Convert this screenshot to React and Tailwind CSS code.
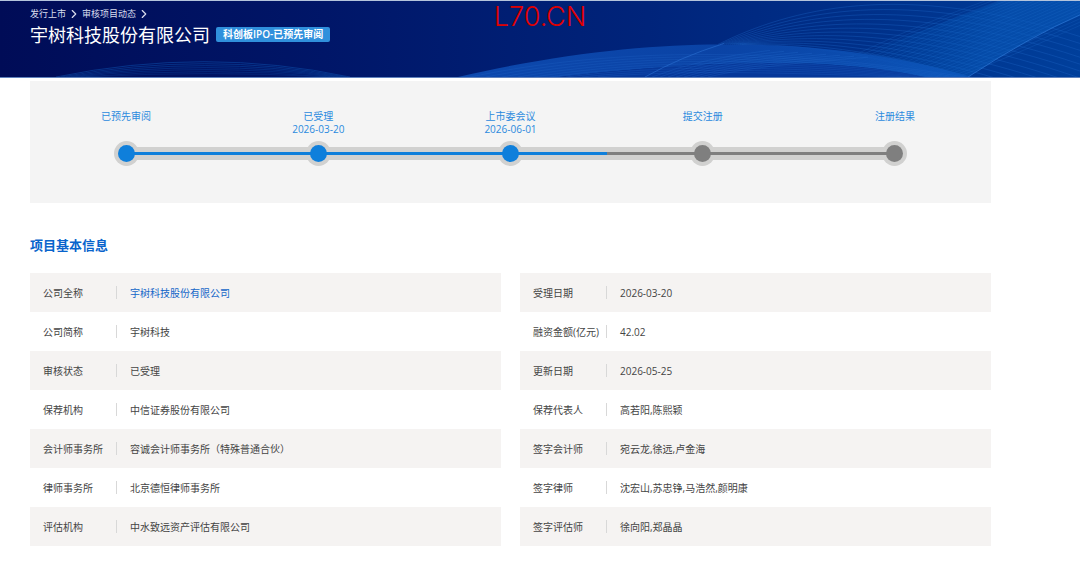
import { ChevronRight } from 'lucide-react'

const steps = [
  { name: '已预先审阅', date: '', done: true },
  { name: '已受理', date: '2026-03-20', done: true },
  { name: '上市委会议', date: '2026-06-01', done: true },
  { name: '提交注册', date: '', done: false },
  { name: '注册结果', date: '', done: false },
]

const companyInfo = [
  { label: '公司全称', value: '宇树科技股份有限公司', link: true },
  { label: '公司简称', value: '宇树科技' },
  { label: '审核状态', value: '已受理' },
  { label: '保荐机构', value: '中信证券股份有限公司' },
  { label: '会计师事务所', value: '容诚会计师事务所（特殊普通合伙）' },
  { label: '律师事务所', value: '北京德恒律师事务所' },
  { label: '评估机构', value: '中水致远资产评估有限公司' },
]

const projectInfo = [
  { label: '受理日期', value: '2026-03-20' },
  { label: '融资金额(亿元)', value: '42.02' },
  { label: '更新日期', value: '2026-05-25' },
  { label: '保荐代表人', value: '高若阳,陈熙颖' },
  { label: '签字会计师', value: '宛云龙,徐远,卢金海' },
  { label: '签字律师', value: '沈宏山,苏忠铮,马浩然,颜明康' },
  { label: '签字评估师', value: '徐向阳,郑晶晶' },
]

const range = (n) => Array.from({ length: n }, (_, i) => i)

function BannerWaves() {
  return (
    <svg
      className="absolute inset-0 h-full w-full"
      viewBox="0 0 1080 77"
      preserveAspectRatio="none"
      fill="none"
      aria-hidden="true"
    >
      <defs>
        <linearGradient id="sky" x1="0" x2="1" y1="0" y2="0">
          <stop offset="0" stopColor="#000c57" />
          <stop offset="0.3" stopColor="#001668" />
          <stop offset="0.6" stopColor="#00247b" />
          <stop offset="0.8" stopColor="#003089" />
          <stop offset="1" stopColor="#003f9b" />
        </linearGradient>
        <linearGradient id="arch" x1="460" x2="970" y1="0" y2="0" gradientUnits="userSpaceOnUse">
          <stop offset="0" stopColor="#0f50b8" />
          <stop offset="0.5" stopColor="#0c48ac" />
          <stop offset="1" stopColor="#0d58bd" />
        </linearGradient>
        <linearGradient id="sheet" x1="890" x2="985" y1="0" y2="55" gradientUnits="userSpaceOnUse">
          <stop offset="0" stopColor="#0058b8" stopOpacity="0" />
          <stop offset="1" stopColor="#0858b8" stopOpacity="0.6" />
        </linearGradient>
      </defs>
      <rect width="1080" height="77" fill="url(#sky)" />

      {/* low ripples on the left */}
      {range(7).map((i) => (
        <path
          key={i}
          d={`M${56 + i * 5} 77 Q${205 + i} ${46 + i * 4} ${350 - i * 4} 77`}
          stroke="#0b4aa5"
          strokeOpacity={0.6 - i * 0.05}
        />
      ))}

      {/* upper fan */}
      {range(13).map((i) => (
        <path
          key={i}
          d={`M${718 + i * 2} 44 C${790 + i * 3} ${8 + i * 3} ${900 + i * 2} ${-22 + i * 7} 1080 ${36 + i * 7}`}
          stroke="#1860c0"
          strokeOpacity="0.4"
        />
      ))}

      {/* diagonal sheet */}
      <path d="M800 77 L1000 0 H1080 V14 Q1030 36 968 77 Z" fill="url(#sheet)" />
      {range(22).map((i) => (
        <path
          key={i}
          d={`M${810 + i * 7} 77 Q${900 + i * 6} ${30 + i} ${990 + i * 7} -2`}
          stroke="#2372d0"
          strokeOpacity="0.22"
        />
      ))}
      <path d="M968 77 Q1030 36 1080 14" stroke="#2c78d6" strokeOpacity="0.7" />

      {/* centre arch */}
      <path
        d="M458 77 C560 53 650 44 720 44 C800 44 880 50 970 77 H925 C850 60 740 56 560 77 Z"
        fill="url(#arch)"
        fillOpacity="0.85"
      />
      <path d="M560 77 C740 56 850 60 925 77 Z" fill="#06389a" />
      {range(9).map((i) => (
        <path
          key={i}
          d={`M${470 + i * 16} 77 C${580 + i * 12} ${54 + i * 2} ${740 + i * 4} ${40 + i * 4} ${965 - i * 8} 77`}
          stroke="#2468cc"
          strokeOpacity="0.25"
        />
      ))}
      <path d="M645 77 Q680 57 724 43" stroke="#2a70d2" strokeOpacity="0.6" />
      {range(8).map((i) => (
        <path
          key={i}
          d={`M${652 + i * 8} 77 Q${700 + i * 8} ${58 + i} ${770 + i * 14} ${50 + i}`}
          stroke="#2a70d2"
          strokeOpacity="0.25"
        />
      ))}
    </svg>
  )
}

function Banner() {
  return (
    <header className="relative h-[78px] overflow-hidden border-t border-b border-t-[#b4c4dc] border-b-[#5f82bd] bg-[#001668] text-white">
      <BannerWaves />
      <div className="relative px-[30px] pt-[5px]">
        <nav className="flex items-center gap-px text-[9px] leading-4 text-[#d9deee]">
          <a href="#list">发行上市</a>
          <ChevronRight size={14} strokeWidth={2} />
          <a href="#projects">审核项目动态</a>
          <ChevronRight size={14} strokeWidth={2} />
        </nav>
        <div className="flex items-center gap-[6px]">
          <h1 className="pt-px text-[18px] leading-6">宇树科技股份有限公司</h1>
          <span className="rounded-[2px] bg-[#3090dc] px-[7px] text-[10px] leading-[15px] font-semibold">
            科创板IPO-已预先审阅
          </span>
        </div>
      </div>
      <div className="absolute top-0 left-1/2 -translate-x-1/2 font-['Inter',sans-serif] text-[27px] leading-[31px] font-light text-[#e00000]">
        L70.CN
      </div>
    </header>
  )
}

function Step({ step, first, last }) {
  const color = step.done ? 'bg-[#0f7fdb]' : 'bg-[#7f7f7f]'

  return (
    <li className="flex flex-col">
      <div className="h-[31px] text-center text-[10px] leading-[13px] text-[#2b8ade]">
        <p>{step.name}</p>
        <p>{step.date}</p>
      </div>
      <div className="grid h-[25px] grid-cols-2 items-center">
        <div className="col-span-2 col-start-1 row-start-1 size-[25px] justify-self-center rounded-full bg-[#d1d1d0]" />
        {/* track, half a column on each side of the dot */}
        <div className={`col-start-1 row-start-1 flex h-[13px] items-center ${first ? '' : 'bg-[#d1d1d0]'}`}>
          {!first && <div className={`h-[3px] w-full ${color}`} />}
        </div>
        <div className={`col-start-2 row-start-1 flex h-[13px] items-center ${last ? '' : 'bg-[#d1d1d0]'}`}>
          {!last && <div className={`h-[3px] w-full ${color}`} />}
        </div>
        <div className={`col-span-2 col-start-1 row-start-1 size-[17px] justify-self-center rounded-full ${color}`} />
      </div>
    </li>
  )
}

function InfoTable({ rows }) {
  return (
    <table className="w-full text-left text-[10px] leading-[15px] text-[#444]">
      <tbody>
        {rows.map((row) => (
          <tr key={row.label} className="h-[39px] odd:bg-[#f5f3f2]">
            <th scope="row" className="w-[87px] p-0 pl-[13px] font-normal whitespace-nowrap">
              <div className="flex items-center justify-between">
                <span className="pt-[2px]">{row.label}</span>
                <span className="h-[13px] w-px bg-[#d8d8d8]" />
              </div>
            </th>
            <td className="pt-[2px] pr-3 pb-0 pl-[13px]">
              {row.link ? (
                <a href="#company" className="text-[#1466c8]">{row.value}</a>
              ) : (
                row.value
              )}
            </td>
          </tr>
        ))}
      </tbody>
    </table>
  )
}

export default function App() {
  return (
    <div className="min-h-screen bg-white font-['Open_Sans','Noto_Sans_CJK_SC',sans-serif]">
      <Banner />
      <main className="pt-[3px] pr-[89px] pb-8 pl-[30px]">
        <ol className="grid grid-cols-5 bg-[#f4f4f4] pt-[29px] pb-[37px]">
          {steps.map((step, i) => (
            <Step key={step.name} step={step} first={i === 0} last={i === steps.length - 1} />
          ))}
        </ol>

        <h2 className="pt-8 pb-[18px] text-[13px] leading-5 font-bold text-[#0864cc]">项目基本信息</h2>

        <div className="grid grid-cols-2 items-start gap-[19px]">
          <InfoTable rows={companyInfo} />
          <InfoTable rows={projectInfo} />
        </div>
      </main>
    </div>
  )
}
